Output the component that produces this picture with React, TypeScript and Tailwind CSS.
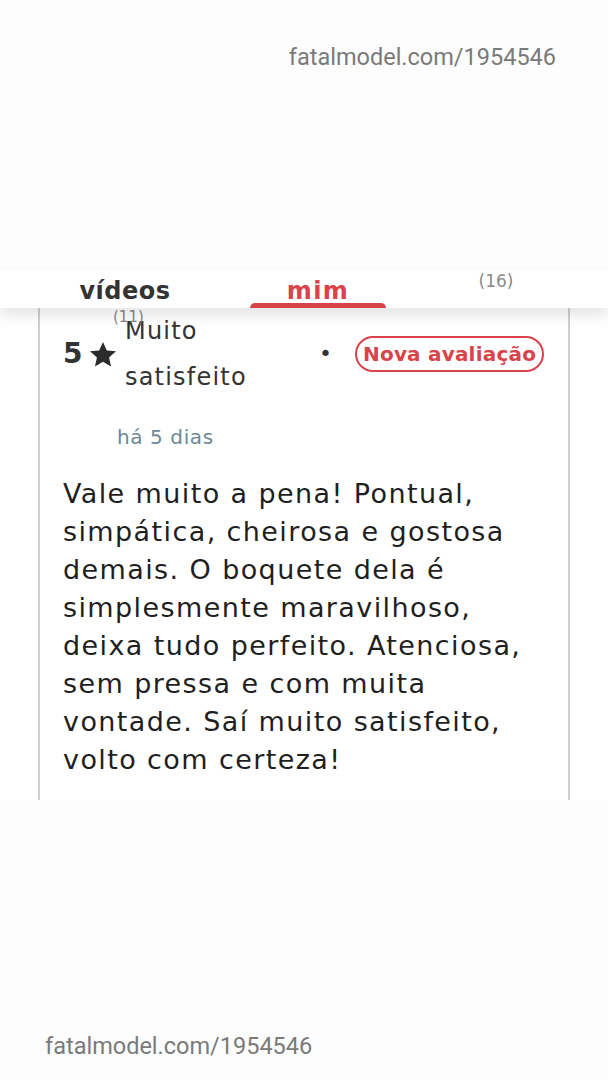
import React from 'react';

const body = `Vale muito a pena! Pontual,
simpática, cheirosa e gostosa
demais. O boquete dela é
simplesmente maravilhoso,
deixa tudo perfeito. Atenciosa,
sem pressa e com muita
vontade. Saí muito satisfeito,
volto com certeza!`;

const App: React.FC = () => {
  return (
    <div className="w-[608px] h-[1080px] bg-[#fdfdfd] flex flex-col overflow-hidden" style={{ fontFamily: '"DejaVu Sans", sans-serif' }}>
      {/* watermark top */}
      <div className="h-[270px] pt-[43px] pr-[52px] text-right">
        <span className="text-[23.5px] leading-[28px] text-[#7a7a7a]" style={{ fontFamily: 'Roboto, sans-serif' }}>
          fatalmodel.com/1954546
        </span>
      </div>

      {/* tabs */}
      <div className="relative z-10 h-[38px] bg-white flex shadow-[0_8px_14px_rgba(0,0,0,0.10)]">
        <div className="w-[250px] flex justify-center items-center pt-[3px]">
          <span className="text-[24px] font-bold tracking-[0.5px] text-[#333]">vídeos</span>
        </div>
        <div className="w-[136px] relative flex justify-center items-center pt-[3px]">
          <span className="text-[24px] font-bold tracking-[1.5px] text-[#d9434a]">mim</span>
          <div className="absolute left-0 right-0 bottom-0 h-[5px] rounded-t-full bg-[#d9434a]" />
        </div>
        <div className="flex-1 flex justify-center items-start pt-[1px] pr-[2px] overflow-hidden">
          <span className="text-[17px] leading-[20px] text-[#8a8a8a]">(16)</span>
        </div>
      </div>

      {/* card */}
      <div className="bg-white">
        <div className="mx-[38px] border-x-2 border-[#cfcfcf] h-[492px] pl-[23px]">
          <div className="flex items-center h-[92px]">
            <span className="w-[62px] flex items-center gap-[7px] text-[#333] whitespace-nowrap">
              <span className="text-[28px] font-bold">5</span>
              <svg width="28" height="27" viewBox="0 0 24 23" className="mt-[1px]">
                <path d="M12 0.8l3.3 7.2 7.8 0.8-5.9 5.3 1.7 7.7L12 17.8l-6.9 4 1.7-7.7L0.9 8.8l7.8-0.8z" fill="#2b2b2b" />
              </svg>
            </span>
            <div className="relative w-[194px] text-[24px] leading-[46px] tracking-[1.2px] text-[#333]">
              <span className="absolute -left-[12px] top-[2px] text-[15px] tracking-normal leading-none text-[#888]">(11)</span>
              <div>Muito</div>
              <div>satisfeito</div>
            </div>
            <span className="w-[36px] text-[22px] text-[#333] leading-none">•</span>
            <span className="rounded-full border-2 border-[#d9434a] px-[6px] h-[36px] flex items-center text-[20px] tracking-[0.2px] font-bold text-[#d9434a] whitespace-nowrap">
              Nova avaliação
            </span>
          </div>
          <div className="pl-[54px] pt-[24px] text-[20px] leading-[26px] tracking-[0.6px] text-[#6d8793]">há 5 dias</div>
          <div className="pt-[25px] text-[27px] leading-[38px] tracking-[1.4px] text-[#1f1f1f] whitespace-pre-line">{body}</div>
        </div>
      </div>

      {/* watermark bottom */}
      <div className="flex-1 pl-[45px] pt-[232px]">
        <span className="text-[23.5px] leading-[28px] text-[#7a7a7a]" style={{ fontFamily: 'Roboto, sans-serif' }}>
          fatalmodel.com/1954546
        </span>
      </div>
    </div>
  );
};

export default App;
